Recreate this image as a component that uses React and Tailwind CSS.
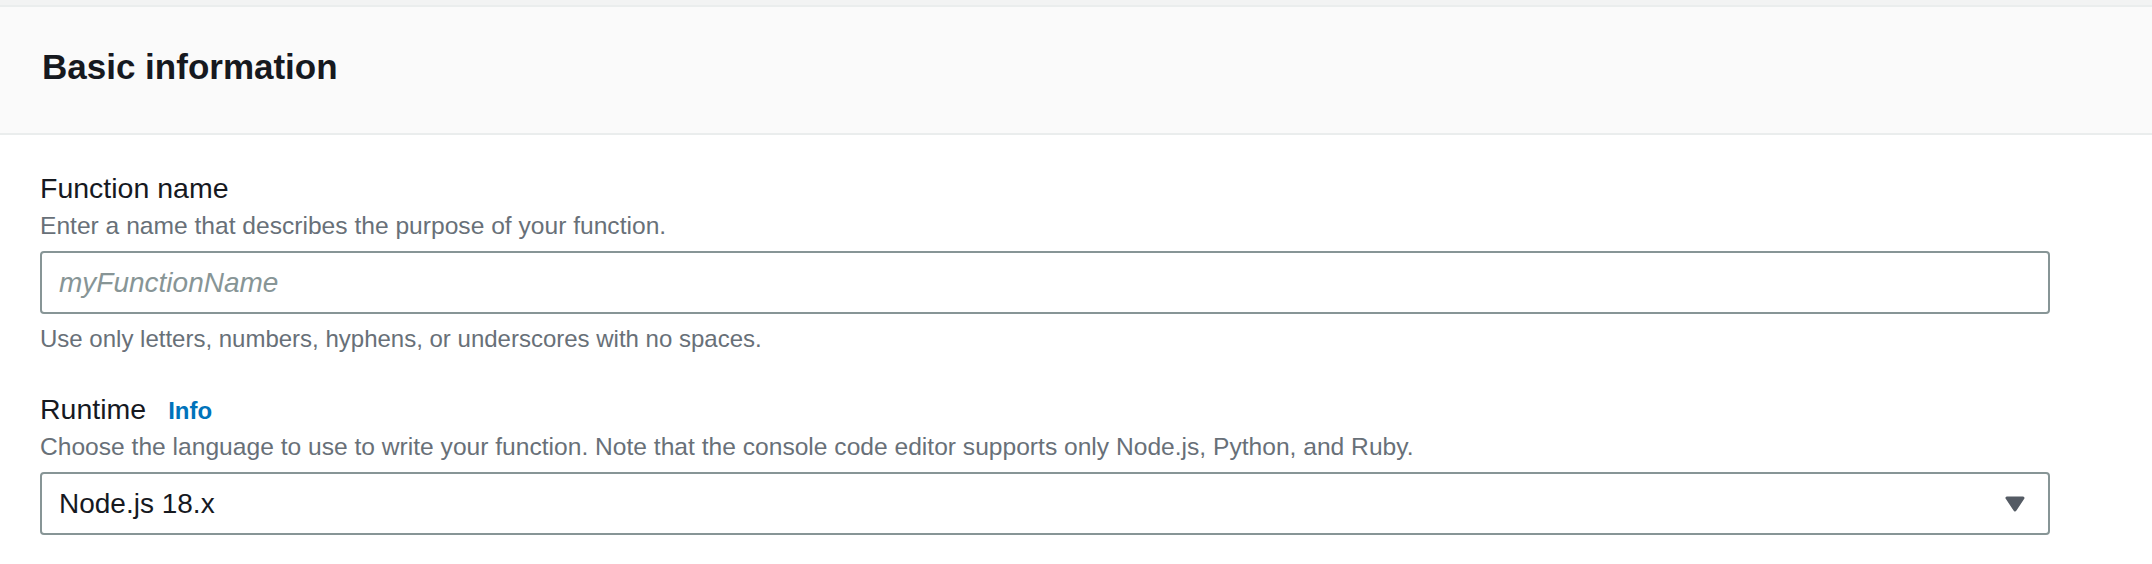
import React from 'react';

function Caret() {
    return (
        <svg width="22" height="18" viewBox="0 0 22 18" className="shrink-0">
            <path d="M3 3 L19 3 L11 15 Z" fill="#545b64" stroke="#545b64" strokeWidth="3" strokeLinejoin="round" />
        </svg>
    );
}

function Field({ label, info, description, children, constraint }) {
    return (
        <div className="flex flex-col">
            <div className="h-[44px] flex items-baseline text-[28.5px] leading-[44px] text-[#16191f]">
                <span>{label}</span>
                {info && <span className="ml-[22px] text-[24px] font-bold text-[#0073bb]">Info</span>}
            </div>
            <div className="text-[24.6px] leading-[32px] text-[#687078]">{description}</div>
            <div className="mt-[9px]">{children}</div>
            {constraint && (
                <div className="mt-[9px] text-[24px] leading-[32px] text-[#687078]">{constraint}</div>
            )}
        </div>
    );
}

export default function App() {
    return (
        <div className="w-full h-[564px] bg-white overflow-hidden font-['Liberation_Sans',Arial,sans-serif]">
            <div className="h-[5px] bg-[#f2f3f3]" />
            <div className="bg-[#fafafa] border-y-2 border-[#eaeded] pl-[42px] pt-[38px] pb-[44px]">
                <h2 className="text-[35px] leading-[44px] font-bold text-[#16191f]">Basic information</h2>
            </div>

            <div className="pl-[40px] pr-[102px] pt-[31px] flex flex-col gap-[32px]">
                <Field
                    label="Function name"
                    description="Enter a name that describes the purpose of your function."
                    constraint="Use only letters, numbers, hyphens, or underscores with no spaces."
                >
                    <div className="h-[63px] border-2 border-[#879596] rounded-[4px] flex items-center px-[17px]">
                        <span className="text-[28px] italic text-[#879596]">myFunctionName</span>
                    </div>
                </Field>

                <Field
                    label="Runtime"
                    info
                    description="Choose the language to use to write your function. Note that the console code editor supports only Node.js, Python, and Ruby."
                >
                    <div className="h-[63px] border-2 border-[#879596] rounded-[4px] flex items-center justify-between pl-[17px] pr-[22px]">
                        <span className="text-[28px] text-[#16191f]">Node.js 18.x</span>
                        <Caret />
                    </div>
                </Field>
            </div>
        </div>
    );
}
